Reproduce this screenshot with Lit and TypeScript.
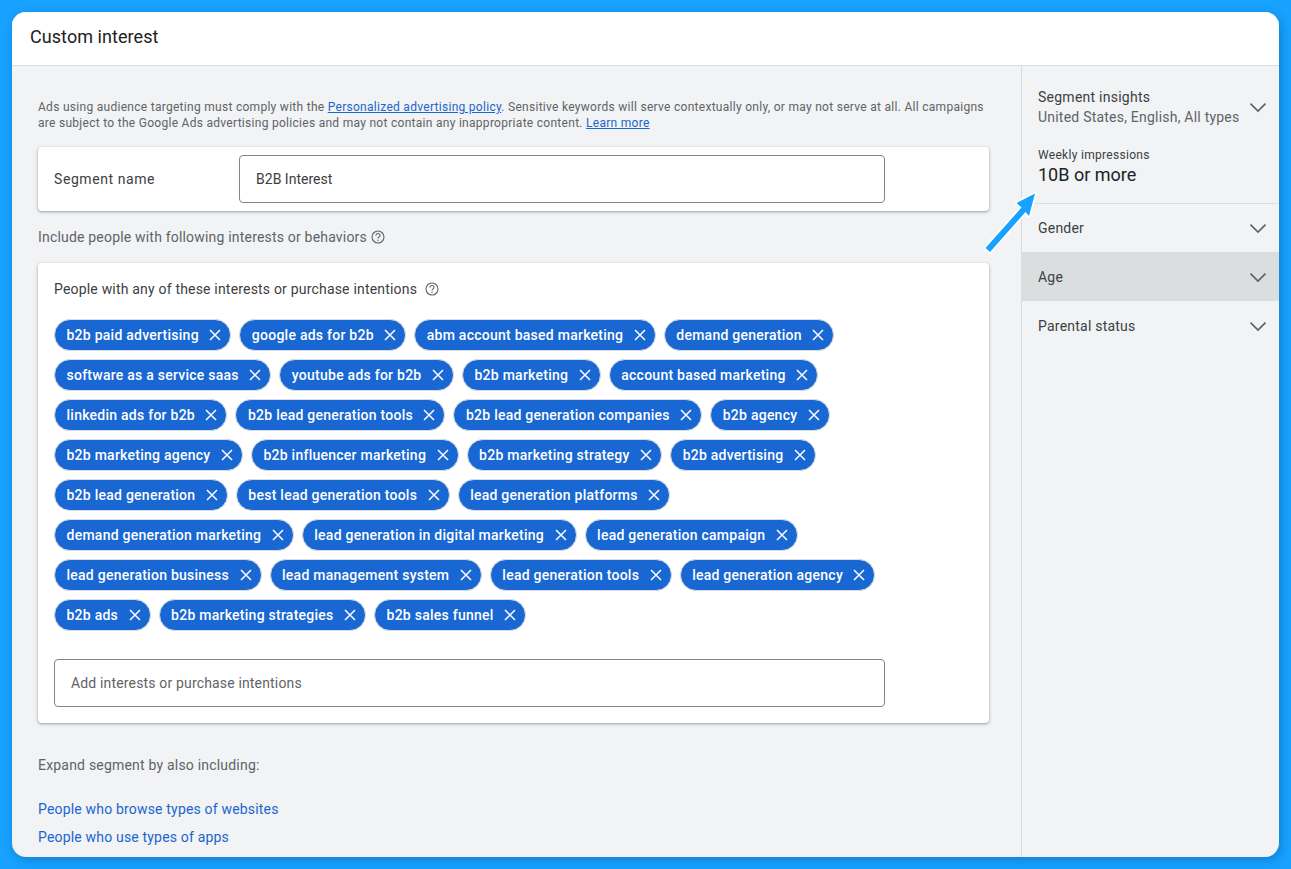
import { LitElement, html, css, svg } from "lit";
import { customElement } from "lit/decorators.js";

const ROWS: string[][] = [
  ["b2b paid advertising", "google ads for b2b", "abm account based marketing", "demand generation"],
  ["software as a service saas", "youtube ads for b2b", "b2b marketing", "account based marketing"],
  ["linkedin ads for b2b", "b2b lead generation tools", "b2b lead generation companies", "b2b agency"],
  ["b2b marketing agency", "b2b influencer marketing", "b2b marketing strategy", "b2b advertising"],
  ["b2b lead generation", "best lead generation tools", "lead generation platforms"],
  ["demand generation marketing", "lead generation in digital marketing", "lead generation campaign"],
  ["lead generation business", "lead management system", "lead generation tools", "lead generation agency"],
  ["b2b ads", "b2b marketing strategies", "b2b sales funnel"],
];

const chevron = html`<svg class="chev" width="24" height="24" viewBox="0 0 24 24"><path d="M4.5 8.6 12 16 19.5 8.6" fill="none" stroke="#5f6368" stroke-width="1.7"/></svg>`;
const help = html`<svg class="help" width="16" height="16" viewBox="0 0 16 16"><circle cx="8" cy="8" r="6" fill="none" stroke="#5f6368" stroke-width="1.1"/><path d="M6 6.5a2 2 0 0 1 4 0c0 1.3-2 1.5-2 3" fill="none" stroke="#5f6368" stroke-width="1.1"/><circle cx="8" cy="11.2" r=".7" fill="#5f6368"/></svg>`;
const close = svg`<path d="M1 1 11 11M11 1 1 11" stroke="#fff" stroke-width="1.5" fill="none"/>`;

@customElement("app-root")
export class AppRoot extends LitElement {
  static styles = css`
    :host { display: block; width: 1291px; height: 869px; background: #17a2ff; box-sizing: border-box; padding: 12px; font-family: Roboto, "Liberation Sans", sans-serif; overflow: hidden; position: relative; color: #3c4043; }
    * { box-sizing: border-box; }
    .win { height: 845px; width: 1267px; border-radius: 14px; overflow: hidden; background: #f1f3f4; display: flex; flex-direction: column; box-shadow: 2px 3px 10px rgba(0,40,90,.28); }
    .head { height: 54px; flex: none; background: #fff; border-bottom: 1px solid #dadce0; padding: 0 18px; font-size: 18px; line-height: 50px; letter-spacing: .06px; color: #202124; }
    .body { flex: 1; display: flex; min-height: 0; }
    .main { width: 1010px; flex: none; padding: 33px 26px 0 26px; border-right: 1px solid #dadce0; }
    .side { flex: 1; }
    .notice { font-size: 12px; line-height: 16px; letter-spacing: .285px; color: #5f6368; height: 32px; white-space: nowrap; }
    a { color: #1a66d0; text-decoration: underline; }
    .card { background: #fff; border-radius: 4px; box-shadow: 0 1px 2px rgba(60,64,67,.3), 0 1px 3px 1px rgba(60,64,67,.15); width: 951px; }
    .seg { margin-top: 16px; height: 64px; display: flex; align-items: center; padding-left: 16px; }
    .seg .lbl { width: 185px; font-size: 14px; letter-spacing: .58px; color: #3c4043; }
    .input { width: 646px; height: 48px; border: 1px solid #80868b; border-radius: 4px; padding-left: 16px; display: flex; align-items: center; font-size: 14px; letter-spacing: .02px; color: #3c4043; background: #fff; }
    .inc { margin-top: 18px; height: 16px; display: flex; align-items: center; gap: 3px; font-size: 14px; line-height: 16px; letter-spacing: .19px; color: #5f6368; }
    .help { flex: none; }
    .people { margin-top: 18px; height: 460px; padding: 18px 16px 0; }
    .ptitle { display: flex; align-items: center; gap: 7px; font-size: 14px; line-height: 16px; letter-spacing: .19px; color: #3c4043; height: 16px; }
    .rows { margin-top: 22px; display: flex; flex-direction: column; gap: 8px; }
    .row { display: flex; gap: 8px; height: 32px; }
    .chip { height: 32px; border: 1px solid #dadce0; border-radius: 16px; background: #1967d2; color: #fff; display: flex; align-items: center; padding: 0 9px 0 11.5px; font-size: 14px; font-weight: 500; letter-spacing: .25px; white-space: nowrap; gap: 10.5px; }
    .chip svg { flex: none; }
    .add { margin-top: 28px; width: 831px; color: #5f6368; letter-spacing: .16px; }
    .exp { margin-top: 34px; font-size: 14px; line-height: 16px; letter-spacing: .2px; color: #5f6368; }
    .link { display: block; font-size: 14px; line-height: 16px; letter-spacing: .18px; color: #1a66d0; text-decoration: none; }
    .l1 { margin-top: 28px; }
    .l2 { margin-top: 12px; }
    .s1 { height: 138px; padding: 21px 9px 0 16px; border-bottom: 1px solid #dadce0; position: relative; }
    .s1top { display: flex; justify-content: space-between; align-items: center; }
    .s1 .t { font-size: 14px; line-height: 20px; letter-spacing: .25px; color: #3c4043; }
    .s1 .sub { font-size: 14px; line-height: 20px; letter-spacing: .22px; color: #5f6368; }
    .wk { margin-top: 20px; font-size: 12px; line-height: 16px; letter-spacing: .3px; color: #3c4043; }
    .big { font-size: 18px; line-height: 24px; color: #202124; }
    .acc { height: 49px; display: flex; align-items: center; justify-content: space-between; padding: 0 9px 0 16px; font-size: 14px; letter-spacing: .22px; color: #3c4043; }
    .first { height: 48px; }
    .hl { background: #dbdedf; }
    .arrow { position: absolute; left: 978px; top: 186px; }
  `;

  render() {
    return html`
      <div class="win">
        <div class="head">Custom interest</div>
        <div class="body">
          <div class="main">
            <div class="notice">Ads using audience targeting must comply with the <a>Personalized advertising policy</a>. Sensitive keywords will serve contextually only, or may not serve at all. All campaigns<br>are subject to the Google Ads advertising policies and may not contain any inappropriate content. <a>Learn more</a></div>
            <div class="card seg"><div class="lbl">Segment name</div><div class="input">B2B Interest</div></div>
            <div class="inc">Include people with following interests or behaviors ${help}</div>
            <div class="card people">
              <div class="ptitle">People with any of these interests or purchase intentions ${help}</div>
              <div class="rows">
                ${ROWS.map((r) => html`<div class="row">${r.map((c) => html`<div class="chip">${c}<svg width="12" height="12" viewBox="0 0 12 12">${close}</svg></div>`)}</div>`)}
              </div>
              <div class="input add">Add interests or purchase intentions</div>
            </div>
            <div class="exp">Expand segment by also including:</div>
            <a class="link l1">People who browse types of websites</a>
            <a class="link l2">People who use types of apps</a>
          </div>
          <div class="side">
            <div class="s1">
              <div class="s1top"><div><div class="t">Segment insights</div><div class="sub">United States, English, All types</div></div>${chevron}</div>
              <div class="wk">Weekly impressions</div>
              <div class="big">10B or more</div>
            </div>
            <div class="acc first">Gender ${chevron}</div>
            <div class="acc hl">Age ${chevron}</div>
            <div class="acc">Parental status ${chevron}</div>
          </div>
        </div>
      </div>
      <svg class="arrow" width="64" height="76" viewBox="0 0 64 76">
        <polygon points="57,7.5 38.5,17 43.5,21.5 7.5,62 12,66 47.5,26 51,30" fill="#17a2ff" stroke="#fff" stroke-width="3.5" stroke-linejoin="round" paint-order="stroke"/>
      </svg>
    `;
  }
}
